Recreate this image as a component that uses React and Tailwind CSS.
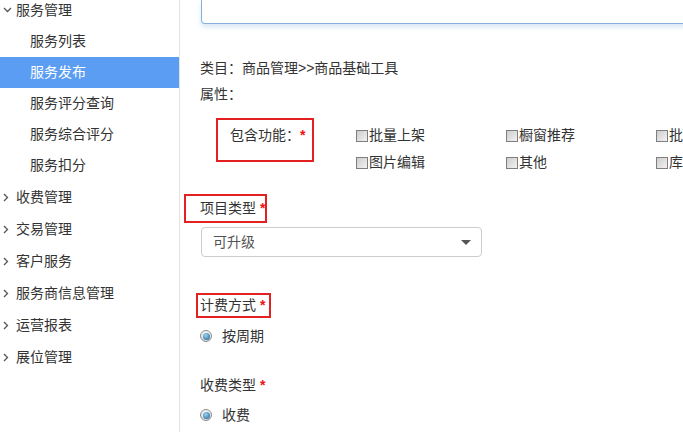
import React from 'react';

const font = { fontFamily: '"Liberation Sans", "Noto Sans CJK SC", sans-serif' };

function Chevron({ down }) {
  return down ? (
    <svg width="9" height="6" viewBox="0 0 9 6" className="ml-[3px] mr-[4px]">
      <path d="M1 1 L4.5 4.5 L8 1" fill="none" stroke="#555" strokeWidth="1.3" />
    </svg>
  ) : (
    <svg width="6" height="9" viewBox="0 0 6 9" className="ml-[3px] mr-[7px]">
      <path d="M1 1 L4.5 4.5 L1 8" fill="none" stroke="#555" strokeWidth="1.3" />
    </svg>
  );
}

const subItems = ['服务列表', '服务发布', '服务评分查询', '服务综合评分', '服务扣分'];
const topItems = ['收费管理', '交易管理', '客户服务', '服务商信息管理', '运营报表', '展位管理'];

function Sidebar() {
  return (
    <div className="w-[180px] shrink-0 border-r border-[#e3e3e3] text-[14px] text-[#333]">
      <div className="-mt-[6px]">
        <div className="flex h-[32px] items-center">
          <Chevron down />
          <span>服务管理</span>
        </div>
        {subItems.map((s) => (
          <div
            key={s}
            className={
              s === '服务发布'
                ? 'flex h-[31px] items-center bg-[#5b9df2] pl-[30px] text-white'
                : 'flex h-[31px] items-center pl-[30px]'
            }
          >
            {s}
          </div>
        ))}
        {topItems.map((s) => (
          <div key={s} className="flex h-[32px] items-center">
            <Chevron />
            <span>{s}</span>
          </div>
        ))}
      </div>
    </div>
  );
}

function Checkbox({ label }) {
  return (
    <div className="flex h-[27px] items-center">
      <span className="inline-block h-[12px] w-[12px] shrink-0 border border-[#7e7e7e] bg-gradient-to-br from-[#cdcdcd] to-[#f2f2f2]"></span>
      <span className="ml-[1px]">{label}</span>
    </div>
  );
}

function Radio({ label }) {
  return (
    <div className="flex h-[20px] items-center pl-[20px]">
      <span className="flex h-[12px] w-[12px] items-center justify-center rounded-full border border-[#8d8d8d] bg-gradient-to-b from-[#f4f4f4] to-[#d8d8d8]">
        <span className="h-[7px] w-[7px] rounded-full bg-[radial-gradient(circle_at_40%_35%,#9ad6f5,#1a5a8a)]"></span>
      </span>
      <span className="ml-[10px]">{label}</span>
    </div>
  );
}

const Star = () => <span className="font-bold text-[#e11]">*</span>;

function Main() {
  return (
    <div className="relative min-w-0 flex-1 overflow-hidden text-[14px] text-[#333]">
      <div className="ml-[21px] -mr-[20px] h-[24px] rounded-bl-[4px] border border-t-0 border-[#86b2da] shadow-[0_3px_5px_rgba(140,185,225,0.35)]"></div>

      <div className="mt-[31px] pl-[20px] leading-[26px]">
        <div>类目：商品管理&gt;&gt;商品基础工具</div>
        <div>属性：</div>
      </div>

      <div className="mt-[11px] flex">
        <div className="ml-[36px] h-[44px] w-[98px] shrink-0 whitespace-nowrap border-2 border-[#e32121] pl-[12px] pt-[5px] leading-[20px]">
          包含功能：<Star />
        </div>
        <div className="ml-[42px] grid shrink-0 grid-cols-[150px_150px_150px] whitespace-nowrap pt-[4px]">
          <Checkbox label="批量上架" />
          <Checkbox label="橱窗推荐" />
          <Checkbox label="批量下架" />
          <Checkbox label="图片编辑" />
          <Checkbox label="其他" />
          <Checkbox label="库存管理" />
        </div>
      </div>

      <div className="ml-[4px] mt-[18px] flex h-[29px] w-[83px] items-center whitespace-nowrap border-2 border-[#e32121] pl-[14px]">
        项目类型&nbsp;<Star />
      </div>

      <div className="ml-[21px] mt-[4px] flex h-[30px] w-[281px] items-center justify-between rounded-[4px] border border-[#cccccc] pl-[11px] pr-[10px] text-[#555]">
        <span>可升级</span>
        <svg width="10" height="5" viewBox="0 0 10 5">
          <path d="M0 0 L10 0 L5 5 Z" fill="#555" />
        </svg>
      </div>

      <div className="ml-[16px] mt-[36px] flex h-[25px] w-[75px] items-center whitespace-nowrap border-2 border-[#e32121] pl-[2px]">
        计费方式&nbsp;<Star />
      </div>

      <div className="mt-[8px]">
        <Radio label="按周期" />
      </div>

      <div className="mt-[29px] flex h-[20px] items-center pl-[20px]">
        收费类型&nbsp;<Star />
      </div>

      <div className="mt-[10px]">
        <Radio label="收费" />
      </div>
    </div>
  );
}

export default function App() {
  return (
    <div className="flex h-[432px] w-[683px] overflow-hidden bg-white" style={font}>
      <Sidebar />
      <Main />
    </div>
  );
}
